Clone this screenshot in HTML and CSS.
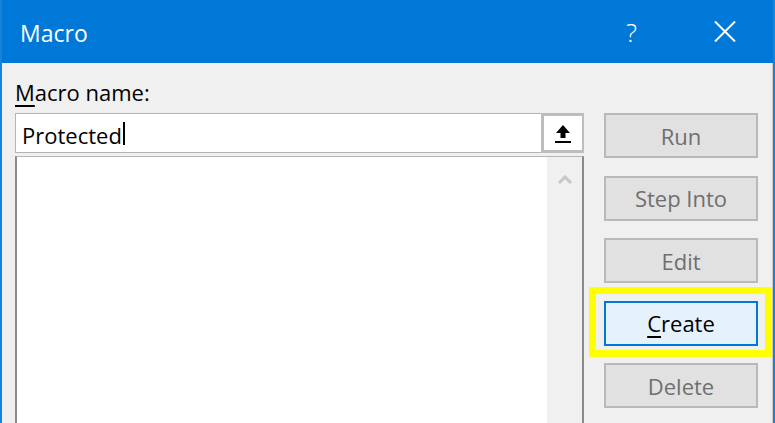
FILE: index.html
```html
<!DOCTYPE html>
<html>
<head>
<meta charset="utf-8">
<link rel="stylesheet" href="styles.css">
</head>
<body>
<div class="window">
  <div class="titlebar">
    <span class="title">Macro</span>
    <span class="help">?</span>
    <svg class="close" width="22" height="21" viewBox="0 0 22 21"><path d="M1 0.5 L21 20.5 M21 0.5 L1 20.5" stroke="#fff" stroke-width="2" fill="none"/></svg>
  </div>
  <div class="body">
    <div class="left">
      <div class="label"><u>M</u>acro name:</div>
      <div class="combo">
        <div class="input">Protected<span class="caret"></span></div>
        <div class="upbtn">
          <svg width="18" height="20" viewBox="0 0 18 20"><path d="M9 1 L16 9 L11.5 9 L11.5 14 L6.5 14 L6.5 9 L2 9 Z" fill="#000"/><rect x="1" y="17" width="16" height="2" fill="#000"/></svg>
        </div>
      </div>
      <div class="list">
        <div class="items"></div>
        <div class="scroll">
          <svg width="14" height="9" viewBox="0 0 14 9"><path d="M1 8 L7 2 L13 8" stroke="#c8c8c8" stroke-width="3" fill="none"/></svg>
        </div>
      </div>
    </div>
    <div class="buttons">
      <div class="btn">Run</div>
      <div class="btn">Step Into</div>
      <div class="btn">Edit</div>
      <div class="hl"><div class="btn active"><u>C</u>reate</div></div>
      <div class="btn">Delete</div>
    </div>
  </div>
</div>
</body>
</html>
```
FILE: styles.css
```css
html, body {
  margin: 0;
  padding: 0;
  width: 775px;
  height: 423px;
  overflow: hidden;
  background: #f0f0f0;
}
.window {
  width: 775px;
  height: 423px;
  box-sizing: border-box;
  border-left: 2px solid #1783d9;
  border-right: 2px solid #1783d9;
  background: #f0f0f0;
  font-family: "Open Sans", "Noto Sans", sans-serif;
  display: flex;
  flex-direction: column;
  overflow: hidden;
}
.titlebar {
  height: 63px;
  flex: none;
  background: #0078d7;
  color: #fff;
  display: flex;
  align-items: center;
  padding-left: 18px;
}
.title {
  font-size: 23px;
  flex: 1;
  padding-top: 2px;
}
.help {
  font-size: 26px;
  font-weight: 300;
  margin-right: 77px;
  padding-top: 1px;
}
.close {
  margin-right: 37px;
}
.body {
  flex: 1;
  display: flex;
  gap: 20px;
  padding-left: 13px;
  border-right: 1px solid #c9c9c9;
}
.left {
  width: 569px;
  display: flex;
  flex-direction: column;
}
.label {
  height: 50px;
  box-sizing: border-box;
  padding-top: 15px;
  font-size: 22px;
  line-height: 28px;
  color: #000;
}
.label u {
  text-underline-offset: 4px;
  text-decoration-thickness: 2px;
}
.combo {
  height: 40px;
  display: flex;
  box-sizing: border-box;
  border: 1px solid #b4b4b4;
  background: #fff;
}
.input {
  flex: 1;
  font-size: 22px;
  line-height: 38px;
  padding-left: 6px;
  color: #000;
  display: flex;
  align-items: center;
  padding-top: 3px;
  box-sizing: border-box;
}
.caret {
  display: inline-block;
  width: 2px;
  height: 23px;
  background: #000;
  margin-left: 1px;
  margin-top: -3px;
}
.upbtn {
  width: 43px;
  box-sizing: border-box;
  border: 3px solid #bdbdbd;
  border-right-width: 2px;
  background: #fff;
  display: flex;
  align-items: center;
  justify-content: center;
  margin: -1px -1px -1px 0;
  height: 40px;
}
.upbtn svg {
  margin-top: 2px;
}
.list {
  margin-top: 3px;
  flex: 1;
  display: flex;
  background: #fff;
  border-left: 2px solid #8a8a8a;
  border-top: 1px solid #b4b4b4;
  border-right: 2px solid #8a8a8a;
}
.items {
  flex: 1;
}
.scroll {
  width: 35px;
  background: #f0f0f0;
  display: flex;
  justify-content: center;
  align-items: flex-start;
  padding-top: 18px;
  box-sizing: border-box;
}
.buttons {
  width: 154px;
  display: flex;
  flex-direction: column;
  padding-top: 50px;
  gap: 17.5px;
}
.btn {
  height: 45px;
  flex: none;
  box-sizing: border-box;
  border: 2px solid #b9b9b9;
  background: #e1e1e1;
  color: #6f6f6f;
  font-size: 22px;
  display: flex;
  align-items: center;
  justify-content: center;
}
.hl {
  margin: -13.5px -14px -11.5px -15px;
  border: 7px solid #ffff00;
  padding: 6.5px 7px 4.5px 8px;
}
.btn.active {
  background: #e5f1fb;
  border-color: #0078d7;
  color: #000;
}
.btn.active u {
  text-underline-offset: 4px;
  text-decoration-thickness: 2px;
}
```
